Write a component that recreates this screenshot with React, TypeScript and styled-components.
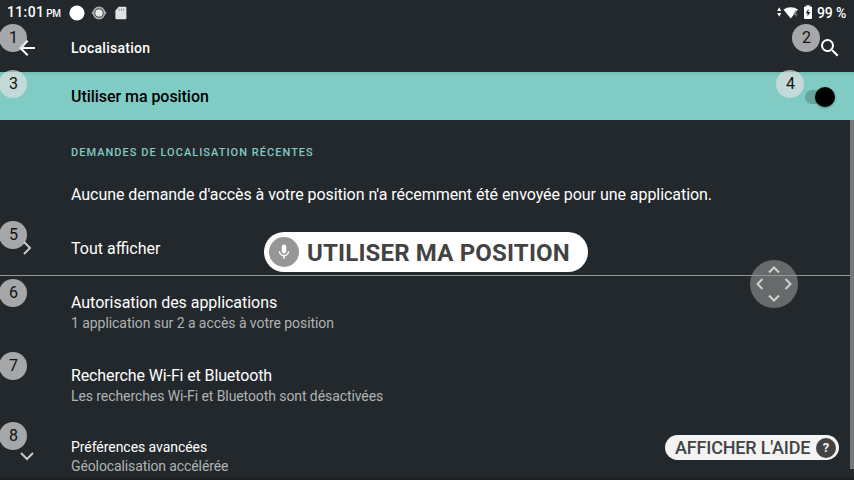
import React from 'react';
import styled, { createGlobalStyle } from 'styled-components';

const Global = createGlobalStyle`
  * { box-sizing: border-box; }
  html, body { margin: 0; background: #23282c; overflow: hidden; }
  body { font-family: Roboto, "Liberation Sans", sans-serif; color: #fff; }
  svg { display: block; flex: none; }
`;

const Screen = styled.main`
  position: relative;
  width: 854px;
  height: 480px;
  overflow: hidden;
  display: flex;
  flex-direction: column;
  background: #23282c;
`;

const StatusBar = styled.header`
  flex: none;
  height: 24px;
  display: flex;
  align-items: center;
  padding: 1px 8px 0 7px;
`;

const Clock = styled.span`
  width: 62px;
  font-size: 14px;
  font-weight: 500;
  line-height: 24px;
  letter-spacing: 0.35px;
  white-space: nowrap;
`;

const Meridiem = styled.small`
  margin-left: 2px;
  font-size: 10px;
  letter-spacing: -0.3px;
`;

const Notifications = styled.div`
  display: flex;
  align-items: center;
  gap: 6px;
  flex: 1;
`;

const SystemIcons = styled.div`
  display: flex;
  align-items: center;
`;

const Battery = styled.span`
  margin-left: 4px;
  font-size: 14px;
  font-weight: 500;
  line-height: 24px;
  letter-spacing: -0.2px;
  white-space: nowrap;
`;

const AppBar = styled.nav`
  flex: none;
  height: 48px;
  display: flex;
  align-items: center;
  padding: 0 12px 0 15px;
`;

const AppTitle = styled.h1`
  flex: 1;
  margin: 0 0 0 32px;
  font-size: 14px;
  font-weight: 500;
  line-height: 20px;
  letter-spacing: 0.25px;
`;

const SwitchBar = styled.section`
  flex: none;
  height: 48px;
  display: flex;
  align-items: center;
  justify-content: space-between;
  padding: 1px 19.5px 0 71px;
  background: linear-gradient(#76bcb4, #80cbc4 4px);
  color: #000;
  font-size: 16px;
  font-weight: 500;
  letter-spacing: -0.05px;
`;

const Track = styled.span`
  width: 30px;
  height: 14px;
  display: flex;
  align-items: center;
  justify-content: flex-end;
  border-radius: 7px;
  background: #66a39d;
`;

const Thumb = styled.span`
  flex: none;
  width: 20px;
  height: 20px;
  border-radius: 50%;
  background: #000;
  box-shadow: 0 1px 2px rgba(0, 0, 0, 0.35);
`;

const Category = styled.h2`
  flex: none;
  margin: 21px 0 3px 71px;
  font-size: 11px;
  font-weight: 500;
  line-height: 24px;
  letter-spacing: 1.03px;
  color: #80cbc4;
`;

const Message = styled.p`
  flex: none;
  margin: 0;
  padding-left: 71px;
  height: 53px;
  font-size: 16px;
  line-height: 53px;
  letter-spacing: -0.053px;
`;

const Row = styled.section<{ $height: number; $divided?: boolean }>`
  flex: none;
  height: ${(p) => p.$height}px;
  display: flex;
  align-items: center;
  border-bottom: ${(p) => (p.$divided ? '1px solid #92979a' : '0')};
`;

const RowIcon = styled.div`
  width: 71px;
  padding-left: 15px;
`;

const RowText = styled.div`
  display: flex;
  flex-direction: column;
`;

const RowTitle = styled.span<{ $small?: boolean; $track?: number }>`
  font-size: ${(p) => (p.$small ? 14 : 16)}px;
  line-height: ${(p) => (p.$small ? 19 : 21)}px;
  letter-spacing: ${(p) => p.$track ?? 0}px;
`;

const RowSummary = styled.span<{ $small?: boolean; $track?: number }>`
  font-size: 14px;
  line-height: ${(p) => (p.$small ? 19 : 21)}px;
  letter-spacing: ${(p) => p.$track ?? 0}px;
  color: #b0b3b4;
`;

const Scrollbar = styled.div`
  position: absolute;
  right: 0;
  top: 120px;
  width: 4px;
  height: 349px;
  background: #76797b;
`;

const BottomEdge = styled.div`
  position: absolute;
  left: 0;
  right: 0;
  bottom: 0;
  height: 4px;
  background: linear-gradient(#202327, #1c1d22);
`;

const Badge = styled.span<{ $x: number; $y: number }>`
  position: absolute;
  left: ${(p) => p.$x}px;
  top: ${(p) => p.$y}px;
  width: 28px;
  height: 28px;
  border-radius: 50%;
  background: rgba(225, 225, 225, 0.69);
  color: #101112;
  font-size: 16px;
  line-height: 27px;
  text-align: center;
  padding-left: 1px;
`;

const VoicePill = styled.div`
  position: absolute;
  left: 264px;
  top: 232px;
  width: 324px;
  height: 40px;
  display: flex;
  align-items: center;
  padding-left: 5px;
  gap: 8px;
  border-radius: 20px;
  background: #fff;
  color: #434343;
`;

const VoiceLabel = styled.span`
  padding-top: 2px;
  font-size: 24px;
  font-weight: 700;
  line-height: 38px;
  letter-spacing: 0.17px;
  white-space: nowrap;
`;

const MicCircle = styled.span`
  width: 30px;
  height: 30px;
  display: grid;
  place-items: center;
  border-radius: 50%;
  background: #969696;
`;

const HelpPill = styled.div`
  position: absolute;
  left: 665px;
  top: 435px;
  width: 174px;
  height: 25px;
  display: flex;
  align-items: center;
  justify-content: space-between;
  padding: 0 3px 0 10px;
  border-radius: 13px;
  background: #f3f3f3;
  color: #434343;
  font-size: 18px;
  font-weight: 500;
  letter-spacing: -0.18px;
  white-space: nowrap;
`;

const HelpCircle = styled.span`
  width: 20px;
  height: 20px;
  border-radius: 50%;
  background: #434343;
  color: #f3f3f3;
  font-size: 13px;
  font-weight: 700;
  line-height: 20px;
  letter-spacing: 0;
  text-align: center;
`;

const Pad = styled.div`
  position: absolute;
  left: 750px;
  top: 260px;
  width: 48px;
  height: 48px;
  border-radius: 50%;
  background: rgba(148, 148, 148, 0.6);
`;

const Chevron = ({ d }: { d: string }) => (
  <svg width="24" height="24" viewBox="0 0 24 24" fill="none" stroke="#c8caca" strokeWidth="2">
    <path d={d} />
  </svg>
);

const badges = [
  { n: 1, x: -1, y: 24 },
  { n: 2, x: 792, y: 24 },
  { n: 3, x: -1, y: 70 },
  { n: 4, x: 776, y: 70 },
  { n: 5, x: -1, y: 221 },
  { n: 6, x: -1, y: 279 },
  { n: 7, x: -1, y: 352 },
  { n: 8, x: -1, y: 422 },
];

export default function App() {
  return (
    <>
      <Global />
      <Screen>
        <StatusBar>
          <Clock>11:01<Meridiem>PM</Meridiem></Clock>
          <Notifications>
            <svg width="16" height="16" viewBox="0 0 16 16"><circle cx="8" cy="8" r="7.6" fill="#fff" /></svg>
            <svg width="16" height="16" viewBox="0 0 16 16" fill="none" stroke="#a9acad">
              <circle cx="8" cy="8" r="5.5" strokeWidth="1.9" />
              <circle cx="8" cy="8" r="3.8" fill="#e8e9e9" stroke="none" />
              <path d="M0.8 8h2M13.2 8h2" strokeWidth="2" />
            </svg>
            <svg width="14" height="14" viewBox="0 0 14 14">
              <path d="M5.8 0.8H12.4a1 1 0 0 1 1 1v10.4a1 1 0 0 1-1 1H3.4a1 1 0 0 1-1-1V4.6Z" fill="#e1e2e2" />
              <path d="M6.1 2.6v2.2M8.4 2.6v2.2M10.7 2.6v2.2" stroke="#8c8f91" strokeWidth="1" />
            </svg>
          </Notifications>
          <SystemIcons>
            <svg width="36" height="16" viewBox="0 0 36 16" fill="#fff">
              <path d="M0.2 6 2.2 2.2l2 3.8ZM0.2 8h4L2.2 11.8Z" />
              <path d="M6.4 4.6C10.6 1.3 16.8 1.3 21 4.6L13.7 13.6Z" />
              <path d="M18.9 5.5v6M16.7 9.5h3.7M18.9 5.5l-2.2 4" fill="none" stroke="#7d8082" strokeWidth="1" />
              <path d="M29.3 0.2h3.4v1.3H34a1 1 0 0 1 1 1v10.4a1 1 0 0 1-1 1h-6a1 1 0 0 1-1-1V2.5a1 1 0 0 1 1-1h1.3Z" />
              <path d="M31.5 3.7 28.7 8.3h1.8v3.3l2.9-4.6h-1.9Z" fill="#23282c" />
            </svg>
            <Battery>99 %</Battery>
          </SystemIcons>
        </StatusBar>

        <AppBar>
          <svg width="24" height="24" viewBox="0 0 24 24" fill="#fff">
            <path d="M20 11H7.83l5.59-5.59L12 4l-8 8 8 8 1.41-1.41L7.83 13H20Z" />
          </svg>
          <AppTitle>Localisation</AppTitle>
          <svg width="24" height="24" viewBox="0 0 24 24" fill="#fff">
            <path d="M15.5 14h-.79l-.28-.27A6.47 6.47 0 0 0 16 9.5 6.5 6.5 0 1 0 9.5 16c1.61 0 3.09-.59 4.23-1.57l.27.28v.79l5 4.99L20.49 19l-4.99-5Zm-6 0a4.5 4.5 0 1 1 0-9 4.5 4.5 0 0 1 0 9Z" />
          </svg>
        </AppBar>

        <SwitchBar>
          Utiliser ma position
          <Track><Thumb /></Track>
        </SwitchBar>

        <Category>DEMANDES DE LOCALISATION RÉCENTES</Category>
        <Message>Aucune demande d'accès à votre position n'a récemment été envoyée pour une application.</Message>

        <Row $height={55} $divided>
          <RowIcon><Chevron d="m9 6 6 6-6 6" /></RowIcon>
          <RowTitle>Tout afficher</RowTitle>
        </Row>
        <Row $height={73}>
          <RowIcon />
          <RowText>
            <RowTitle $track={-0.04}>Autorisation des applications</RowTitle>
            <RowSummary $track={-0.06}>1 application sur 2 a accès à votre position</RowSummary>
          </RowText>
        </Row>
        <Row $height={73}>
          <RowIcon />
          <RowText>
            <RowTitle $track={-0.12}>Recherche Wi-Fi et Bluetooth</RowTitle>
            <RowSummary $track={-0.085}>Les recherches Wi-Fi et Bluetooth sont désactivées</RowSummary>
          </RowText>
        </Row>
        <Row $height={70}>
          <RowIcon><Chevron d="m6 8 6 6 6-6" /></RowIcon>
          <RowText>
            <RowTitle $small $track={-0.05}>Préférences avancées</RowTitle>
            <RowSummary $small $track={-0.11}>Géolocalisation accélérée</RowSummary>
          </RowText>
        </Row>

        <BottomEdge />
        <Scrollbar />
        {badges.map((b) => (
          <Badge key={b.n} $x={b.x} $y={b.y}>{b.n}</Badge>
        ))}
        <VoicePill>
          <MicCircle>
            <svg width="18" height="18" viewBox="0 0 24 24" fill="#fff">
              <path d="M12 14c1.66 0 3-1.34 3-3V5c0-1.66-1.34-3-3-3S9 3.34 9 5v6c0 1.66 1.34 3 3 3Z" />
              <path d="M17.3 11c0 3-2.54 5.1-5.3 5.1S6.7 14 6.7 11H5c0 3.41 2.72 6.23 6 6.72V21h2v-3.28c3.28-.48 6-3.3 6-6.72Z" />
            </svg>
          </MicCircle>
          <VoiceLabel>UTILISER MA POSITION</VoiceLabel>
        </VoicePill>
        <Pad>
          <svg width="48" height="48" viewBox="0 0 48 48" fill="none" stroke="#cfd0d0" strokeWidth="2">
            <path d="m19 12.5 5-5 5 5M19 35.5l5 5 5-5M12.5 19l-5 5 5 5M35.5 19l5 5-5 5" />
          </svg>
        </Pad>
        <HelpPill>AFFICHER L'AIDE<HelpCircle>?</HelpCircle></HelpPill>
      </Screen>
    </>
  );
}
